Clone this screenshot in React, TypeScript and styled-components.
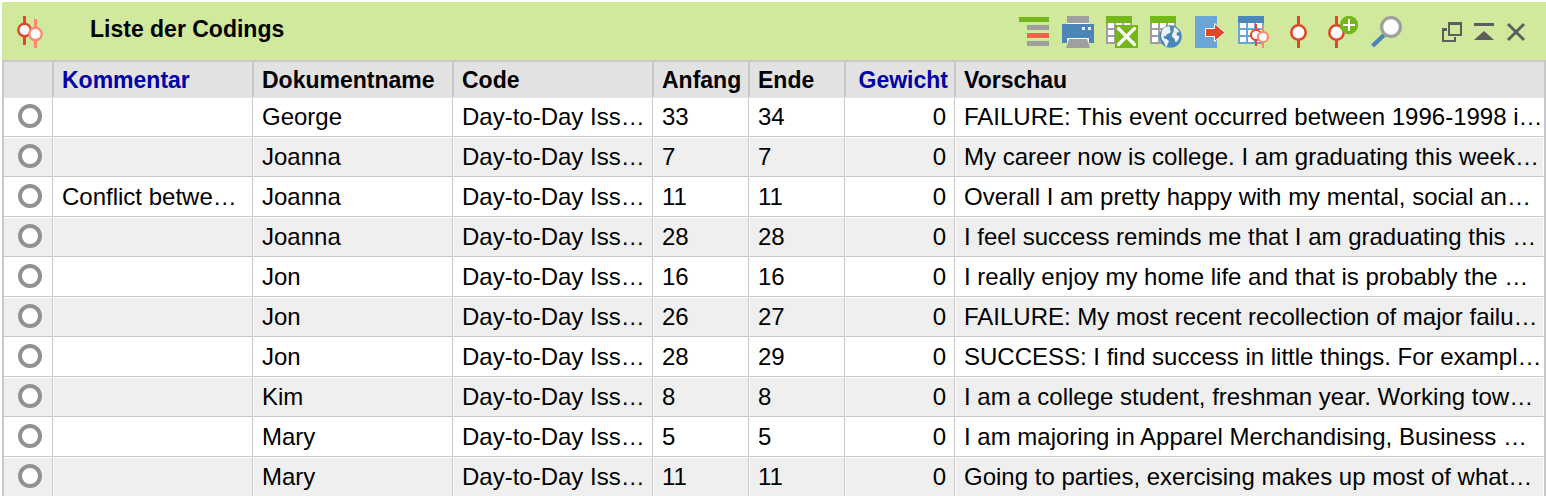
import React from 'react';
import styled, { createGlobalStyle } from 'styled-components';

const GlobalStyle = createGlobalStyle`
  *, *::before, *::after { box-sizing: border-box; }
  body {
    margin: 0;
    background: #fff;
    color: #000;
    font-family: "Liberation Sans", Arial, sans-serif;
    font-size: 24px;
    line-height: 28px;
  }
`;

const line = '#c8c8c8';
const red = '#e0482a';
const salmon = '#ff8870';
const green = '#74b71b';
const blue = '#4c86b9';
const lightBlue = '#6aa5d8';
const grey = '#9f9f9f';

const Panel = styled.main`
  height: 100vh;
  padding: 2px 0 0 2px;
  overflow: hidden;
`;

const Toolbar = styled.header`
  display: flex;
  align-items: flex-start;
  height: 58px;
  padding: 14px 14px 0 12px;
  background: #d0e99d;
`;

const Title = styled.h1`
  flex: 1;
  margin: 0 0 0 44px;
  font-size: 23px;
  line-height: 26px;
  white-space: nowrap;
`;

const Tools = styled.div<{ $gap: number }>`
  display: flex;
  gap: ${(p) => p.$gap}px;
  margin-left: 34px;
`;

const ToolButton = styled.button`
  width: 32px;
  height: 32px;
  padding: 0;
  border: 0;
  background: none;
  cursor: pointer;
`;

const Icon = styled.svg`
  display: block;
  flex: none;
  width: 32px;
  height: 32px;
`;

const TableFrame = styled.div`
  border: 2px solid ${line};
  border-bottom: 0;
`;

const Table = styled.table`
  width: 100%;
  table-layout: fixed;
  border-collapse: separate;
  border-spacing: 0;
`;

const Col = styled.col<{ $width?: number }>`
  width: ${(p) => (p.$width ? `${p.$width}px` : 'auto')};
`;

const HeadCell = styled.th<{ $accent?: boolean; $end?: boolean }>`
  height: 35px;
  padding: 0 6px 0 8px;
  border: 0 solid ${line};
  border-width: 0 1px;
  background: #e2e2e2;
  color: ${(p) => (p.$accent ? '#0000a8' : '#000')};
  font-size: 23px;
  text-align: ${(p) => (p.$end ? 'right' : 'left')};
  white-space: nowrap;
  &:first-child { border-left: 0; }
  &:last-child { border-right-color: #e2e2e2; }
`;

const Cell = styled.td<{ $end?: boolean }>`
  height: 40px;
  padding: 0 8px;
  border: 1px solid #fff;
  border-right-color: ${line};
  border-bottom-color: ${line};
  overflow: hidden;
  text-align: ${(p) => (p.$end ? 'right' : 'left')};
  white-space: nowrap;
  &:first-child { border-left: 0; padding: 0 0 2px 14px; }
  &:last-child { border-right-color: #fff; padding-right: 0; }
`;

const Row = styled.tr`
  background: #fff;
  &:nth-child(even) { background: #efefef; }
  &:first-child > td { border-top-color: #e2e2e2; }
`;

const Marker = styled.input`
  display: block;
  appearance: none;
  width: 24px;
  height: 24px;
  margin: 0;
  border: 4px solid #919191;
  border-radius: 50%;
  background: #fff;
  &:checked { background: #919191; }
`;

const TableGrid = ({ head, frame }: { head: string; frame: string }) => (
  <>
    <path fill={frame} d="M0 6h26v22H0z" />
    <path fill="#fff" d="M2 7h6v5H2zM10 7h6v5h-6zM18 7h6v5h-6zM2 14h6v5H2zM10 14h6v5h-6zM18 14h6v5h-6zM2 21h6v5H2zM10 21h6v5h-6zM18 21h6v5h-6z" />
    <path fill={head} d="M0 0h26v7H0z" />
  </>
);

const CodingsLogo = () => (
  <Icon viewBox="0 0 32 32" aria-hidden="true">
    <path fill={red} d="M9 0h3v29H9z" />
    <circle cx="10.5" cy="14" r="6.2" fill="#fff" stroke={red} strokeWidth="2.4" />
    <path fill={salmon} d="M20 3h3v29h-3z" />
    <circle cx="21.5" cy="18" r="6.2" fill="#fff" stroke={salmon} strokeWidth="2.4" />
  </Icon>
);

const toolIcons: { label: string; art: React.ReactNode }[] = [
  {
    label: 'Gliederung',
    art: (
      <>
        <path fill={green} d="M1 1h30v5H1z" />
        <path fill={grey} d="M9 9h22v5H9zM9 25h22v5H9z" />
        <path fill="#f0654a" d="M9 17h22v5H9z" />
      </>
    ),
  },
  {
    label: 'Drucken',
    art: (
      <>
        <path fill={grey} d="M5 0h22v7H5z" />
        <path fill="#fff" d="M5 7h22v1H5z" />
        <path fill={blue} d="M0 8h32v19H0z" />
        <path fill="#e4edf5" d="M20 11h3v3h-3zM26 11h3v3h-3z" />
        <path fill="#fff" d="M5 22h22v5H5z" />
        <path fill={grey} d="M7 23h18l3 9H4z" />
      </>
    ),
  },
  {
    label: 'Excel-Export',
    art: (
      <>
        <TableGrid head={green} frame={grey} />
        <path fill={green} d="M9 9h23v23H9z" />
        <path stroke="#fff" strokeWidth="3.2" strokeLinecap="round" d="M12.500 12.500l16 16M28.500 12.500l-16 16" />
      </>
    ),
  },
  {
    label: 'HTML-Export',
    art: (
      <>
        <TableGrid head={green} frame={grey} />
        <circle cx="20.5" cy="20.5" r="11.2" fill={blue} />
        <path
          fill="#eaf2f8"
          d="M12 14l3-3 4-.8 1.500 1.800-1 2 1.500.8-1 2.200-3 1-1 2-2.400.4 .4 2.200 2.600.4 2.400 2.200-1.400 2.800-.6 2.600-1.600-.6-1.200-3.400-2.400-3.200-.8-3.400zM24 11l3.500 2 2 3.400-2.200-.4-1 2.200 1.400 1.600 1.600.4-.4 2.200-1.800 3.200-1.600.6-1-3.400-2.200-1.600-.4-3 1.600-2.200z"
        />
      </>
    ),
  },
  {
    label: 'Exportieren',
    art: (
      <>
        <path fill={lightBlue} d="M1 0h22v32H1z" />
        <path fill={red} stroke="#fff" d="M11.500 12.500H20.500V7.500L31 16.500L20.500 25.500V20.500H11.500Z" />
      </>
    ),
  },
  {
    label: 'Codings-Übersicht',
    art: (
      <>
        <TableGrid head={blue} frame={lightBlue} />
        <path fill={red} d="M17 8h2v22h-2z" />
        <circle cx="18" cy="19" r="5" fill="#fff" stroke={red} strokeWidth="2.2" />
        <path fill={salmon} d="M24 10h2v22h-2z" />
        <circle cx="25" cy="21" r="5" fill="#fff" stroke={salmon} strokeWidth="2.2" />
      </>
    ),
  },
  {
    label: 'Code',
    art: (
      <>
        <path fill={red} d="M15 0h3v32h-3z" />
        <circle cx="16.5" cy="16.5" r="7.2" fill="#fff" stroke={red} strokeWidth="2.6" />
      </>
    ),
  },
  {
    label: 'Neuer Code',
    art: (
      <>
        <path fill={red} d="M9 0h3v32H9z" />
        <circle cx="10.5" cy="16.5" r="7.2" fill="#fff" stroke={red} strokeWidth="2.6" />
        <circle cx="23" cy="9" r="9.2" fill={green} />
        <path fill="#fff" d="M17 8h12v2H17zM22 3h2v12h-2z" />
      </>
    ),
  },
  {
    label: 'Suchen',
    art: (
      <>
        <path stroke={blue} strokeWidth="4.4" d="M2.500 30L14 19" />
        <circle cx="21" cy="11" r="9.4" fill="#fff" stroke={grey} strokeWidth="3.2" />
      </>
    ),
  },
];

const windowIcons: { label: string; art: React.ReactNode }[] = [
  {
    label: 'Fenster lösen',
    art: (
      <path
        fill="#5d5d5d"
        fillRule="evenodd"
        d="M12 6h14v14H12zM14 9v9h10V9zM6 12h5v3H8v9h10v-3h2v5H6z"
      />
    ),
  },
  {
    label: 'Minimieren',
    art: <path fill="#5d5d5d" d="M6 7h20v3H6zM16 15l10 9H6z" />,
  },
  {
    label: 'Schließen',
    art: <path stroke="#5d5d5d" strokeWidth="3" d="M8 8l16 16M24 8L8 24" />,
  },
];

type Coding = {
  comment?: string;
  doc: string;
  from: number;
  to: number;
  preview: string;
};

const codings: Coding[] = [
  { doc: 'George', from: 33, to: 34, preview: 'FAILURE: This event occurred between 1996-1998 i…' },
  { doc: 'Joanna', from: 7, to: 7, preview: 'My career now is college. I am graduating this week…' },
  { comment: 'Conflict betwe…', doc: 'Joanna', from: 11, to: 11, preview: 'Overall I am pretty happy with my mental, social an…' },
  { doc: 'Joanna', from: 28, to: 28, preview: 'I feel success reminds me that I am graduating this …' },
  { doc: 'Jon', from: 16, to: 16, preview: 'I really enjoy my home life and that is probably the …' },
  { doc: 'Jon', from: 26, to: 27, preview: 'FAILURE: My most recent recollection of major failu…' },
  { doc: 'Jon', from: 28, to: 29, preview: 'SUCCESS: I find success in little things. For exampl…' },
  { doc: 'Kim', from: 8, to: 8, preview: 'I am a college student, freshman year. Working tow…' },
  { doc: 'Mary', from: 5, to: 5, preview: 'I am majoring in Apparel Merchandising, Business …' },
  { doc: 'Mary', from: 11, to: 11, preview: 'Going to parties, exercising makes up most of what…' },
];

export default function App() {
  return (
    <>
      <GlobalStyle />
      <Panel>
        <Toolbar>
          <CodingsLogo />
          <Title>Liste der Codings</Title>
          <Tools $gap={12}>
            {toolIcons.map(({ label, art }) => (
              <ToolButton key={label} type="button" aria-label={label}>
                <Icon viewBox="0 0 32 32" fill="none">{art}</Icon>
              </ToolButton>
            ))}
          </Tools>
          <Tools $gap={0}>
            {windowIcons.map(({ label, art }) => (
              <ToolButton key={label} type="button" aria-label={label}>
                <Icon viewBox="0 0 32 32" fill="none">{art}</Icon>
              </ToolButton>
            ))}
          </Tools>
        </Toolbar>
        <TableFrame>
          <Table>
            <colgroup>
              <Col $width={49} />
              <Col $width={200} />
              <Col $width={200} />
              <Col $width={200} />
              <Col $width={96} />
              <Col $width={96} />
              <Col $width={110} />
              <Col />
            </colgroup>
            <thead>
              <tr>
                <HeadCell scope="col" />
                <HeadCell scope="col" $accent>Kommentar</HeadCell>
                <HeadCell scope="col">Dokumentname</HeadCell>
                <HeadCell scope="col">Code</HeadCell>
                <HeadCell scope="col">Anfang</HeadCell>
                <HeadCell scope="col">Ende</HeadCell>
                <HeadCell scope="col" $accent $end>Gewicht</HeadCell>
                <HeadCell scope="col">Vorschau</HeadCell>
              </tr>
            </thead>
            <tbody>
              {codings.map((c, i) => (
                <Row key={i}>
                  <Cell>
                    <Marker type="radio" name="coding" aria-label={`${c.doc}, ${c.from}`} />
                  </Cell>
                  <Cell>{c.comment}</Cell>
                  <Cell>{c.doc}</Cell>
                  <Cell>Day-to-Day Iss…</Cell>
                  <Cell>{c.from}</Cell>
                  <Cell>{c.to}</Cell>
                  <Cell $end>0</Cell>
                  <Cell>{c.preview}</Cell>
                </Row>
              ))}
            </tbody>
          </Table>
        </TableFrame>
      </Panel>
    </>
  );
}
